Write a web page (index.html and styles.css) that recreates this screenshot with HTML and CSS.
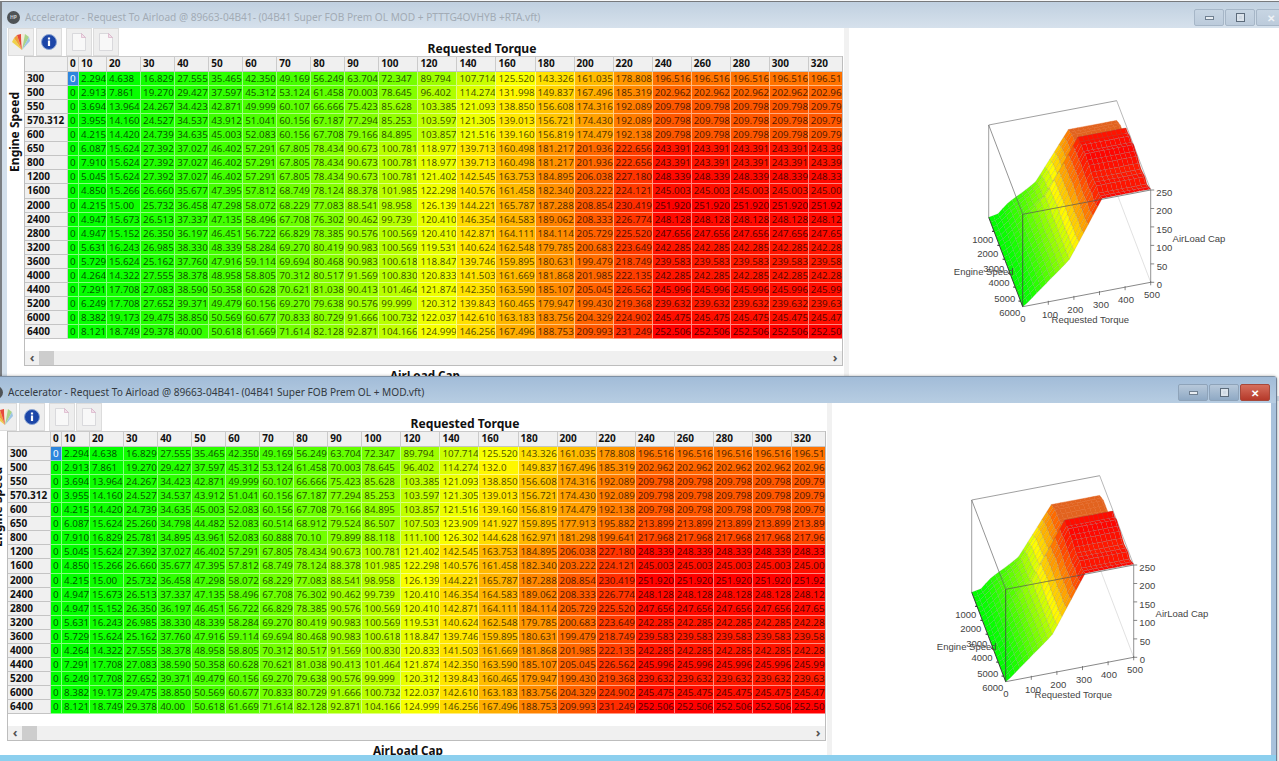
FILE: index.html
```html
<!DOCTYPE html>
<html lang="en">
<head>
<meta charset="utf-8">
<title>Accelerator - Request To Airload</title>
<link rel="stylesheet" href="styles.css">
</head>
<body>
<svg class="defs" width="0" height="0" aria-hidden="true">
  <symbol id="ico-fan" viewBox="0 0 20 20">
    <path d="M11 18 1 10l2-4z" fill="#efd24a"/>
    <path d="M11 18 3 6l3-3z" fill="#f0a03c"/>
    <path d="M11 18 6 3l4-1z" fill="#e64a3a"/>
    <path d="M11 18 10 2l4 0z" fill="#f2ead8"/>
    <path d="M11 18 14 2l4 3z" fill="#a9d488"/>
    <path d="M11 18 18 5l1 4z" fill="#9cc4e4"/>
  </symbol>
  <symbol id="ico-info" viewBox="0 0 20 20">
    <circle cx="10" cy="10" r="7.500" fill="#1c46a8" stroke="#8aa4d2"/>
    <rect x="8.900" y="8.500" width="2.200" height="5.500" fill="#fff"/>
    <rect x="8.900" y="5.500" width="2.200" height="2" fill="#fff"/>
  </symbol>
  <symbol id="ico-doc" viewBox="0 0 20 20">
    <path d="M3.500 1.500h9l4 4v13h-13z" fill="#f8f8f8" stroke="#d2d2d6" stroke-width=".8"/>
    <path d="M12.500 1.500v4h4z" fill="#f2e2ea" stroke="#d3a5c0" stroke-width=".6"/>
  </symbol>
</svg>

<main class="desktop">
  <section class="win win-back">
    <header class="titlebar">
      <span class="app-dot">HP</span>
      <h1 class="title">Accelerator - Request To Airload @ 89663-04B41- (04B41 Super FOB Prem OL MOD + PTTTG4OVHYB +RTA.vft)</h1>
      <div class="controls">
        <span class="ctl"><i class="g-min"></i></span>
        <span class="ctl"><i class="g-max"></i></span>
        <span class="ctl ctl-close">&#10005;</span>
      </div>
    </header>
    <div class="body">
      <div class="left">
        <div class="toolrow">
          <div class="tools">
            <button class="tool"><svg class="ico"><use href="#ico-fan"/></svg></button>
            <button class="tool"><svg class="ico"><use href="#ico-info"/></svg></button>
            <button class="tool gap"><svg class="ico"><use href="#ico-doc"/></svg></button>
            <button class="tool"><svg class="ico"><use href="#ico-doc"/></svg></button>
          </div>
          <div class="axis-top">Requested Torque</div>
        </div>
        <div class="mid">
          <div class="axis-side"><span>Engine Speed</span></div>
          <div class="frame">
            <div class="scroller"><table class="grid" data-map="a"></table></div>
            <div class="hbar">
              <span class="arrow">&#8249;</span><span class="thumb"></span><span class="fill"></span><span class="arrow">&#8250;</span>
            </div>
          </div>
        </div>
        <div class="axis-bottom">AirLoad Cap</div>
      </div>
      <div class="splitter"></div>
      <div class="plot"><svg class="chart" data-map="a" viewBox="0 0 439 348"></svg></div>
    </div>
  </section>

  <section class="win win-front">
    <header class="titlebar">
      <span class="app-dot">HP</span>
      <h1 class="title">Accelerator - Request To Airload @ 89663-04B41- (04B41 Super FOB Prem OL + MOD.vft)</h1>
      <div class="controls">
        <span class="ctl"><i class="g-min"></i></span>
        <span class="ctl"><i class="g-max"></i></span>
        <span class="ctl ctl-close">&#10005;</span>
      </div>
    </header>
    <div class="body">
      <div class="left">
        <div class="toolrow">
          <div class="tools">
            <button class="tool"><svg class="ico"><use href="#ico-fan"/></svg></button>
            <button class="tool"><svg class="ico"><use href="#ico-info"/></svg></button>
            <button class="tool gap"><svg class="ico"><use href="#ico-doc"/></svg></button>
            <button class="tool"><svg class="ico"><use href="#ico-doc"/></svg></button>
          </div>
          <div class="axis-top">Requested Torque</div>
        </div>
        <div class="mid">
          <div class="axis-side"><span>Engine Speed</span></div>
          <div class="frame">
            <div class="scroller"><table class="grid" data-map="b"></table></div>
            <div class="hbar">
              <span class="arrow">&#8249;</span><span class="thumb"></span><span class="fill"></span><span class="arrow">&#8250;</span>
            </div>
          </div>
        </div>
        <div class="axis-bottom">AirLoad Cap</div>
      </div>
      <div class="splitter"></div>
      <div class="plot"><svg class="chart" data-map="b" viewBox="0 0 439 348"></svg></div>
    </div>
  </section>
</main>
<script src="app.js"></script>
</body>
</html>
```
FILE: styles.css
```css
* { box-sizing: border-box; }
html, body { margin: 0; height: 100%; background: #fff; overflow: hidden; }
.defs { position: absolute; }
.desktop { position: relative; width: 1279px; height: 761px; overflow: hidden; background: #f6f7f8; }

.win {
  position: absolute;
  width: 1294px;
  display: flex;
  flex-direction: column;
  font-family: "Noto Sans", "Liberation Sans", sans-serif;
}
.win-back {
  left: 0; top: 1px; height: 400px;
  background: #d3dfeb;
  border-top: 1px solid #77797c;
  border-left: 2px solid #7b7e82;
  padding: 0 5px 5px;
}
.win-front {
  left: -17px; top: 376px; height: 400px;
  background: #a9c2dc;
  border-top: 1px solid #7d8fa3;
  border-right: 1px solid #6f8094;
  padding: 0 5px 6px 7px;
  border-radius: 4px 4px 0 0;
  box-shadow: 0 0 3px rgba(0,0,0,.35);
}
.win-front::after {
  content: "";
  position: absolute;
  left: 0; right: 0;
  top: 378px;
  height: 6px;
  background: #8ccfee;
}

.titlebar { height: 25.500px; padding-top: 5px; display: flex; align-items: center; flex: none; }
.win-back .titlebar { background: linear-gradient(#c0d0e0, #d6e1ec); margin: 0 -5px; padding-left: 5px; padding-right: 5px; }
.win-front .titlebar { background: linear-gradient(#a2bcd8, #b7cde2); margin: 0 -5px 0 -7px; padding-left: 7px; padding-right: 5px; }

.app-dot {
  width: 13px; height: 13px; border-radius: 50%;
  background: #4f5356; color: #c9cccf;
  font-size: 5px; font-weight: 700; line-height: 13px; text-align: center;
  margin-left: 0; margin-right: 5px; flex: none;
}
.title {
  margin: 0; flex: 1; font-size: 10.150px; font-weight: 400; white-space: nowrap; overflow: hidden;
  color: #333a42;
}
.win-back .title { color: #a2abb5; }

.controls { display: flex; gap: 1px; height: 17px; align-self: flex-start; margin-top: 2px; margin-right: 3px; }
.win-front .controls { margin-right: 1px; }
.ctl {
  width: 30px; height: 17px; display: flex; align-items: center; justify-content: center;
  border: 1px solid #a6b6c7; border-radius: 2px;
  background: linear-gradient(#c7d5e3, #bccbdb);
  color: #eef2f6; font-size: 10px; font-weight: 700; line-height: 1;
}
.win-front .ctl { background: linear-gradient(#b7c8da, #8fa9c4); border-color: #8ea3b9; }
.win-front .ctl-close { background: linear-gradient(#d66f5d, #b5392a); border-color: #a7483a; color: #fff; }
.g-min { width: 9px; height: 4px; background: #e8edf2; border: 1px solid #6f7f90; }
.g-max { width: 9px; height: 9px; background: #cfd9e4; border: 1px solid #5c6b7b; box-shadow: inset 0 0 0 2px #dbe3eb; }

.body { flex: 1; display: flex; background: #fff; min-height: 0; }
.left { width: 836px; flex: none; display: flex; flex-direction: column; }
.splitter { width: 5px; margin-left: 1px; background: #f1f1f1; flex: none; }
.plot { flex: 1; min-width: 0; }
.chart { display: block; width: 439px; height: 348px; }

.toolrow { height: 28px; display: flex; flex: none; }
.tools { display: flex; padding-left: 1px; }
.tool {
  width: 26px; height: 28px; padding: 0; margin: 0 2px 0 0; display: flex; align-items: center; justify-content: center;
  background: #eeeeee; border: 1px solid #dcdcdc;
}
.tool.gap { margin-left: 2px; margin-right: 1px; }
.ico { width: 20px; height: 20px; }
.axis-top {
  flex: 1; text-align: center; align-self: flex-end;
  font-size: 12.100px; font-weight: 700; line-height: 14px; color: #111;
}

.mid { display: flex; height: 310px; flex: none; }
.axis-side { width: 17px; flex: none; position: relative; }
.axis-side span {
  display: block; writing-mode: vertical-rl; transform: rotate(180deg);
  margin: 36px 0 0 1px;
  font-size: 12px; font-weight: 700; color: #111; line-height: 14px; white-space: nowrap;
}
.frame { flex: 1; min-width: 0; border: 1px solid #bdbdbd; border-top: 0; display: flex; flex-direction: column; }
.scroller { flex: 1; overflow: hidden; min-height: 0; }
.grid { border-collapse: separate; border-spacing: 0; table-layout: fixed; width: 823px; font-size: 9.800px; }
.grid th, .grid td { padding: 0 0 0 2px; text-align: left; white-space: nowrap; overflow: hidden; line-height: 13px; height: 14px; }
.grid tbody tr:nth-child(9) th, .grid tbody tr:nth-child(9) td { height: 15px; }
.grid th {
  background: #f0f0f0; color: #111; font-weight: 700; font-size: 10px;
  border-right: 1px solid #cbcbcb; border-bottom: 1px solid #c4c4c4;
}
.grid thead th { height: 16px; border-top: 1px solid #c9c9c9; }
.grid td {
  color: rgba(0,0,0,.7);
  border-right: 1px solid rgba(255,255,255,.5); border-bottom: 1px solid rgba(255,255,255,.5);
}
.grid td.sel { background: #2d86dd !important; color: #fff; }

.hbar { height: 14px; flex: none; display: flex; align-items: center; background: #f0f0f0; color: #555; }
.arrow { width: 14px; text-align: center; font-size: 13px; font-weight: 700; line-height: 13px; flex: none; }
.thumb { width: 15px; height: 14px; background: #cdcdcd; flex: none; }
.fill { flex: 1; }
.axis-bottom { text-align: center; font-size: 11.700px; font-weight: 700; color: #111; line-height: 14px; margin-top: 2px; }

.chart .lbl { font-family: "Liberation Sans", "Noto Sans", sans-serif; font-size: 9.500px; fill: #444; text-anchor: middle; }
```
FILE: app.js
```js
var HEAD = ["0","10","20","30","40","50","60","70","80","90","100","120","140","160","180","200","220","240","260","280","300","320"];
var WIDTHS = [43,11,28,34,34,34,34,34,34,34,34,39,39,39,39,39,39,39,39,39,39,39,39];

function row(name, vals, flat) {
  return { name: name, vals: ["0"].concat(vals.split(" "), [flat, flat, flat, flat, flat]) };
}
var A = [
  row("300","2.294 4.638 16.829 27.555 35.465 42.350 49.169 56.249 63.704 72.347 89.794 107.714 125.520 143.326 161.035 178.808","196.516"),
  row("500","2.913 7.861 19.270 29.427 37.597 45.312 53.124 61.458 70.003 78.645 96.402 114.274 131.998 149.837 167.496 185.319","202.962"),
  row("550","3.694 13.964 24.267 34.423 42.871 49.999 60.107 66.666 75.423 85.628 103.385 121.093 138.850 156.608 174.316 192.089","209.798"),
  row("570.312","3.955 14.160 24.527 34.537 43.912 51.041 60.156 67.187 77.294 85.253 103.597 121.305 139.013 156.721 174.430 192.089","209.798"),
  row("600","4.215 14.420 24.739 34.635 45.003 52.083 60.156 67.708 79.166 84.895 103.857 121.516 139.160 156.819 174.479 192.138","209.798"),
  row("650","6.087 15.624 27.392 37.027 46.402 57.291 67.805 78.434 90.673 100.781 118.977 139.713 160.498 181.217 201.936 222.656","243.391"),
  row("800","7.910 15.624 27.392 37.027 46.402 57.291 67.805 78.434 90.673 100.781 118.977 139.713 160.498 181.217 201.936 222.656","243.391"),
  row("1200","5.045 15.624 27.392 37.027 46.402 57.291 67.805 78.434 90.673 100.781 121.402 142.545 163.753 184.895 206.038 227.180","248.339"),
  row("1600","4.850 15.266 26.660 35.677 47.395 57.812 68.749 78.124 88.378 101.985 122.298 140.576 161.458 182.340 203.222 224.121","245.003"),
  row("2000","4.215 15.00 25.732 36.458 47.298 58.072 68.229 77.083 88.541 98.958 126.139 144.221 165.787 187.288 208.854 230.419","251.920"),
  row("2400","4.947 15.673 26.513 37.337 47.135 58.496 67.708 76.302 90.462 99.739 120.410 146.354 164.583 189.062 208.333 226.774","248.128"),
  row("2800","4.947 15.152 26.350 36.197 46.451 56.722 66.829 78.385 90.576 100.569 120.410 142.871 164.111 184.114 205.729 225.520","247.656"),
  row("3200","5.631 16.243 26.985 38.330 48.339 58.284 69.270 80.419 90.983 100.569 119.531 140.624 162.548 179.785 200.683 223.649","242.285"),
  row("3600","5.729 15.624 25.162 37.760 47.916 59.114 69.694 80.468 90.983 100.618 118.847 139.746 159.895 180.631 199.479 218.749","239.583"),
  row("4000","4.264 14.322 27.555 38.378 48.958 58.805 70.312 80.517 91.569 100.830 120.833 141.503 161.669 181.868 201.985 222.135","242.285"),
  row("4400","7.291 17.708 27.083 38.590 50.358 60.628 70.621 81.038 90.413 101.464 121.874 142.350 163.590 185.107 205.045 226.562","245.996"),
  row("5200","6.249 17.708 27.652 39.371 49.479 60.156 69.270 79.638 90.576 99.999 120.312 139.843 160.465 179.947 199.430 219.368","239.632"),
  row("6000","8.382 19.173 29.475 38.850 50.569 60.677 70.833 80.729 91.666 100.732 122.037 142.610 163.183 183.756 204.329 224.902","245.475"),
  row("6400","8.121 18.749 29.378 40.00 50.618 61.669 71.614 82.128 92.871 104.166 124.999 146.256 167.496 188.753 209.993 231.249","252.506")
];
var B = A.slice();
B[1] = row("500","2.913 7.861 19.270 29.427 37.597 45.312 53.124 61.458 70.003 78.645 96.402 114.274 132.0 149.837 167.496 185.319","202.962");
B[5] = row("650","6.087 15.624 25.260 34.798 44.482 52.083 60.514 68.912 79.524 86.507 107.503 123.909 141.927 159.895 177.913 195.882","213.899");
B[6] = row("800","7.910 16.829 25.781 34.895 43.961 52.083 60.888 70.10 79.899 88.118 111.100 126.302 144.628 162.971 181.298 199.641","217.968");
var MAPS = { a: A, b: B };

function color(v) {
  var mid = 128, top = 252.5, r, g;
  if (v < mid) { r = 255 * Math.pow(v / mid, 1.35); g = 255; }
  else { r = 255; g = 255 * Math.max(0, top - v) / (top - mid); }
  return "rgb(" + Math.round(r) + "," + Math.round(g) + ",0)";
}

function buildTable(t, data) {
  var h = "<colgroup>" + WIDTHS.map(function (w) { return '<col style="width:' + w + 'px">'; }).join("") + "</colgroup>";
  h += "<thead><tr><th></th>" + HEAD.map(function (c) { return "<th>" + c + "</th>"; }).join("") + "</tr></thead><tbody>";
  data.forEach(function (r, ri) {
    h += "<tr><th>" + r.name + "</th>";
    r.vals.forEach(function (v, ci) {
      var sel = ri === 0 && ci === 0 ? ' class="sel"' : "";
      h += "<td" + sel + ' style="background:' + color(parseFloat(v)) + '">' + v + "</td>";
    });
    h += "</tr>";
  });
  t.innerHTML = h + "</tbody>";
}

function px(X) { return 12 + X / 3; }
function py(Y) { return Y / 3 - 28; }
function proj(t, s, z) {
  return [
    px(383 + t * 384 + s * 102),
    py(652 - t * 73 + s * 268 - z / 250 * 277)
  ];
}
function f(p) { return p[0].toFixed(1) + "," + p[1].toFixed(1); }
function line(a, b, c, w) {
  return '<line x1="' + a[0].toFixed(1) + '" y1="' + a[1].toFixed(1) + '" x2="' + b[0].toFixed(1) + '" y2="' + b[1].toFixed(1) + '" stroke="' + c + '" stroke-width="' + w + '"/>';
}
function label(X, Y, s) {
  return '<text class="lbl" x="' + px(X).toFixed(1) + '" y="' + (py(Y) + 3.5).toFixed(1) + '">' + s + "</text>";
}

function buildChart(svg, data) {
  var CI = 27.32, rows = data.length, o = "";
  var z = data.map(function (r) {
    var a = r.vals.map(parseFloat), last = a[a.length - 1];
    for (var i = 0; i < 7; i++) a.push(last);
    return a;
  });
  var ncol = z[0].length;
  function P(i, j) {
    return proj(Math.min(1, i / CI), j / (rows - 1), z[j][i]);
  }
  o += line(proj(0, 0, 250), proj(1, 0, 250), "#777", 0.7);
  o += line(proj(1, 0, 250), proj(1, 1, 250), "#888", 0.6);
  o += line(proj(1, 0, 0), proj(1, 1, 0), "#ccc", 0.6);
  o += line(proj(0, 0, 0), proj(0, 0, 250), "#777", 0.7);
  o += line(proj(0, 1, 0), proj(1, 1, 0), "#555", 0.7);
  o += line(proj(1, 1, 0), proj(1, 1, 250), "#666", 0.7);
  for (var j = 0; j < rows - 1; j++) {
    for (var i = ncol - 2; i >= 0; i--) {
      var a = z[j][i], b = z[j][i + 1], c = z[j + 1][i + 1], d = z[j + 1][i], m = (a + b + c + d) / 4;
      var flatTop = i >= 17 && Math.max(a, b, c, d) < 222;
      o += '<polygon points="' + f(P(i, j)) + " " + f(P(i + 1, j)) + " " + f(P(i + 1, j + 1)) + " " + f(P(i, j + 1)) + '" fill="' +
        (flatTop ? "#e2631f" : color(m)) + '" stroke="' + (flatTop ? "#e2631f" : "rgba(105,105,105,.38)") + '" stroke-width=".4"/>';
    }
  }
  o += line(proj(0, 0, 250), proj(0, 1, 250), "#666", 0.7);
  o += line(proj(0, 1, 250), proj(1, 1, 250), "#555", 0.7);
  o += line(proj(0, 1, 0), proj(0, 1, 250), "#444", 0.8);
  o += line(proj(0, 0, 0), proj(0, 1, 0), "#333", 0.9);
  [0.2, 0.4, 0.6, 0.8, 1].forEach(function (t) {
    var p = proj(t, 1, 0);
    o += line([p[0], p[1] - 1], [p[0], p[1] + 3], "#555", 0.7);
  });
  [0, 50, 100, 150, 200, 250].forEach(function (v) {
    var p = proj(1, 1, v);
    o += line(p, [p[0] + 3.5, p[1]], "#555", 0.7);
  });
  [1, 2, 3, 4, 5, 6].forEach(function (k) {
    var p = proj(0, k * 1000 / 6400, 0);
    o += line([p[0] - 2, p[1]], p, "#222", 1);
  });
  [[365,717,"1000"],[380,761,"2000"],[398,805,"3000"],[414,848,"4000"],[431,894,"5000"],[446,938,"6000"],
   [368,815,"Engine Speed"],[486,955,"0"],[567,942,"100"],[643,928,"200"],[720,912,"300"],[795,897,"400"],[873,883,"500"],
   [688,958,"Requested Torque"],[910,577,"250"],[910,631,"200"],[910,688,"150"],[910,743,"100"],[903,799,"50"],[895,853,"0"],
   [1014,715,"AirLoad Cap"]].forEach(function (l) { o += label(l[0], l[1], l[2]); });
  svg.innerHTML = o;
}

Array.prototype.forEach.call(document.querySelectorAll("table.grid"), function (t) {
  buildTable(t, MAPS[t.getAttribute("data-map")]);
});
Array.prototype.forEach.call(document.querySelectorAll("svg.chart"), function (s) {
  buildChart(s, MAPS[s.getAttribute("data-map")]);
});
```
